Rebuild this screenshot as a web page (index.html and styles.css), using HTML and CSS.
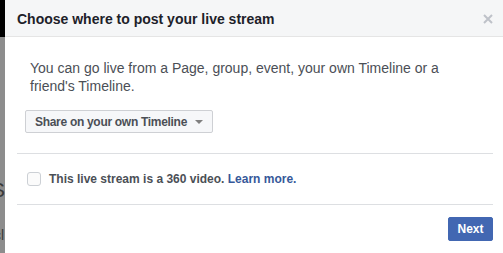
FILE: index.html
```html
<!DOCTYPE html>
<html>
<head>
<link rel="stylesheet" href="styles.css">
<meta charset="UTF-8">
<title>Go live</title>
</head>
<body>
<div class="backdrop">
  <div class="backdrop_top"></div>
  <div class="backdrop_rest">
    <span class="ghost ghost_s">S</span>
    <span class="ghost ghost_c">cl</span>
  </div>
</div>

<div class="dialog">
  <div class="dlg_head">
    <span class="dlg_title">Choose where to post your live stream</span>
    <svg class="close" width="10" height="10" viewBox="0 0 10 10">
      <path d="M1 1 L9 9 M9 1 L1 9" stroke="#bec2c9" stroke-width="2"/>
    </svg>
  </div>

  <div class="dlg_body">
    <p class="intro">You can go live from a Page, group, event, your own Timeline or a friend's Timeline.</p>
    <div class="picker">
      <span class="picker_label">Share on your own Timeline</span>
      <span class="arrow"></span>
    </div>
  </div>

  <div class="option_row">
    <span class="check"></span>
    <span class="option_text">This live stream is a 360 video. <a href="#" class="learn">Learn more.</a></span>
  </div>

  <div class="dlg_foot">
    <button class="next_btn">Next</button>
  </div>
</div>
</body>
</html>
```

FILE: styles.css
```css
html, body {
  margin: 0;
  height: 253px;
  overflow: hidden;
}
body {
  display: flex;
  font-family: "Liberation Sans", Arial, sans-serif;
  background-color: #8b8b8b;
}

/* page behind the dialog */
.backdrop {
  width: 5px;
  flex: none;
  display: flex;
  flex-direction: column;
  overflow: hidden;
}
.backdrop_top {
  height: 37px;
  background-color: #000;
}
.backdrop_rest {
  flex: 1;
  background-color: #8d8d8d;
  position: relative;
}
.ghost {
  position: absolute;
  color: #3a3a3a;
  white-space: nowrap;
}
.ghost_s {
  top: 141px;
  left: -9px;
  font-size: 21px;
}
.ghost_c {
  top: 190px;
  left: -6px;
  font-size: 14px;
}

/* dialog */
.dialog {
  width: 500px;
  flex: none;
  background-color: white;
}
.dlg_head {
  height: 36px;
  padding: 0 12px 0 12px;
  background-color: #f5f6f7;
  border-bottom: 1px solid #e5e5e5;
  display: flex;
  align-items: center;
  justify-content: space-between;
}
.dlg_title {
  font-size: 14px;
  font-weight: bold;
  color: #1d2129;
  padding-top: 1px;
}
.close {
  margin-top: 1px;
}

.dlg_body {
  margin: 0 12px;
  padding: 22px 0 20px 0;
  border-bottom: 1px solid #dddfe2;
}
.intro {
  margin: 0 0 15px 13px;
  font-size: 14px;
  line-height: 18px;
  color: #4b4f56;
  width: 430px;
}
.picker {
  margin-left: 8px;
  width: 168px;
  height: 21px;
  padding: 0 9px;
  background-color: #f6f7f9;
  border: 1px solid #ced0d4;
  border-radius: 2px;
  display: flex;
  align-items: center;
  justify-content: space-between;
  font-size: 12px;
  font-weight: bold;
  color: #4b4f56;
}
.picker_label {
  letter-spacing: -0.3px;
}
.arrow {
  width: 0;
  height: 0;
  border-left: 4px solid transparent;
  border-right: 4px solid transparent;
  border-top: 4px solid #7f7f7f;
  margin-top: 1px;
}

.option_row {
  margin: 0 12px;
  height: 50px;
  border-bottom: 1px solid #dddfe2;
  display: flex;
  align-items: center;
}
.check {
  width: 12px;
  height: 12px;
  margin-left: 10px;
  margin-right: 8px;
  border: 1px solid #ccd0d5;
  border-radius: 3px;
  background-color: #fbfbfb;
}
.option_text {
  font-size: 12px;
  font-weight: bold;
  color: #4b4f56;
}
.learn {
  color: #365899;
  text-decoration: none;
}

.dlg_foot {
  display: flex;
  justify-content: flex-end;
  padding: 12px 12px 0 0;
}
.next_btn {
  background-color: #4267b2;
  border: 1px solid #4267b2;
  border-radius: 2px;
  color: white;
  font-family: "Liberation Sans", Arial, sans-serif;
  font-size: 12px;
  font-weight: bold;
  height: 24px;
  width: 45px;
  padding: 0;
  cursor: pointer;
}
```
